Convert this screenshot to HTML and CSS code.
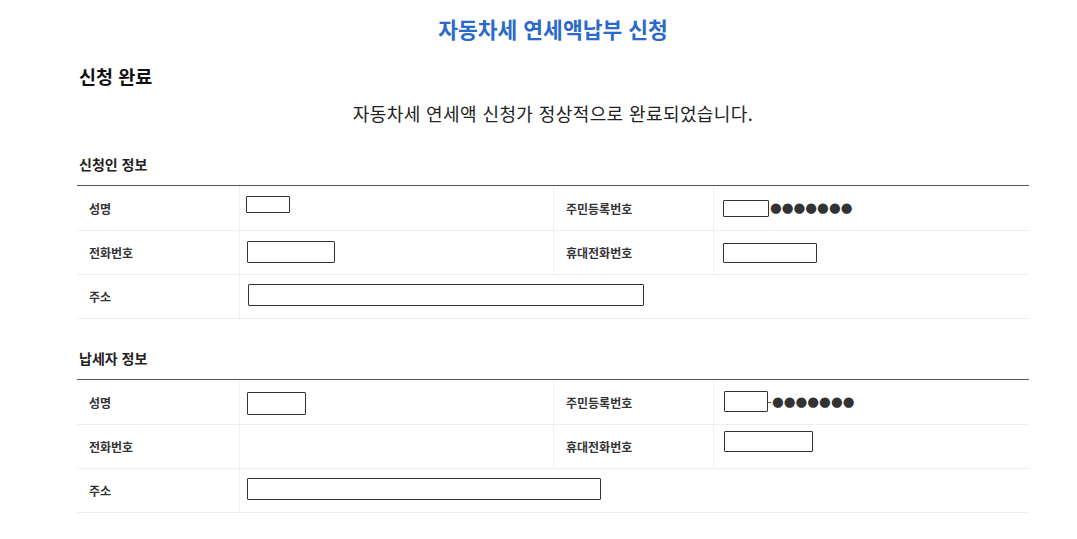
FILE: index.html
```html
<!DOCTYPE html>
<html lang="ko">
<head>
<meta charset="utf-8">
<title>자동차세 연세액납부 신청</title>
<link rel="stylesheet" href="styles.css">
</head>
<body>
<div class="page">
  <h1 class="title">자동차세 연세액납부 신청</h1>
  <h2 class="done-head">신청 완료</h2>
  <p class="message">자동차세 연세액 신청가 정상적으로 완료되었습니다.</p>

  <section class="sec">
    <h3 class="sec-title">신청인 정보</h3>
    <div class="table">
      <div class="row r1">
        <div class="lab">성명</div>
        <div class="val"><span class="box b-name1"></span></div>
        <div class="lab lab2">주민등록번호</div>
        <div class="val"><span class="box b-ssn1"></span><span class="dots">●●●●●●●</span></div>
      </div>
      <div class="row">
        <div class="lab">전화번호</div>
        <div class="val"><span class="box b-tel1"></span></div>
        <div class="lab lab2">휴대전화번호</div>
        <div class="val"><span class="box b-mob1"></span></div>
      </div>
      <div class="row full">
        <div class="lab">주소</div>
        <div class="val"><span class="box b-addr1"></span></div>
      </div>
    </div>
  </section>

  <section class="sec">
    <h3 class="sec-title">납세자 정보</h3>
    <div class="table">
      <div class="row r1">
        <div class="lab">성명</div>
        <div class="val"><span class="box b-name2"></span></div>
        <div class="lab lab2">주민등록번호</div>
        <div class="val"><span class="box b-ssn2"></span><span class="dash"></span><span class="dots">●●●●●●●</span></div>
      </div>
      <div class="row">
        <div class="lab">전화번호</div>
        <div class="val"></div>
        <div class="lab lab2">휴대전화번호</div>
        <div class="val"><span class="box b-mob2"></span></div>
      </div>
      <div class="row full">
        <div class="lab">주소</div>
        <div class="val"><span class="box b-addr2"></span></div>
      </div>
    </div>
  </section>
</div>
</body>
</html>
```

FILE: styles.css
```css
* { box-sizing: border-box; }
html, body { margin: 0; padding: 0; background: #fff; }
body {
  font-family: "Noto Sans CJK KR", "Noto Sans", sans-serif;
  color: #222;
}
.page {
  width: 952px;
  margin-left: 77px;
  padding-top: 14px;
}
.title {
  margin: 0;
  text-align: center;
  font-size: 21.5px;
  line-height: 30px;
  font-weight: 700;
  color: #2a6acb;
}
.done-head {
  margin: 19px 0 0 2px;
  font-size: 18.5px;
  line-height: 26px;
  font-weight: 700;
  color: #111;
}
.message {
  margin: 12px 0 0;
  text-align: center;
  font-size: 18px;
  line-height: 24px;
  letter-spacing: 0.4px;
  color: #222;
}
.sec { margin-top: 29px; }
.sec + .sec { margin-top: 29px; }
.sec-title {
  margin: 0 0 11px 2px;
  font-size: 14px;
  line-height: 20px;
  font-weight: 700;
  color: #222;
}
.table {
  border-top: 1.5px solid #555;
}
.row {
  display: grid;
  grid-template-columns: 163px 314px 160px 315px;
  height: 44px;
  border-bottom: 1px solid #eeeeee;
}
.row.r1 { height: 45px; }
.row.full { grid-template-columns: 163px 789px; }
.lab {
  display: flex;
  align-items: center;
  padding-left: 12px;
  font-size: 12px;
  font-weight: 700;
  color: #333;
  border-right: 1px solid #f1f1f1;
}
.lab2 { padding-left: 12px; }
.val {
  display: flex;
  align-items: center;
  padding-left: 7px;
  border-right: 1px solid #f1f1f1;
}
.row .val:last-child { border-right: none; }
.box {
  display: inline-block;
  background: #fff;
  border: 1.5px solid #333;
  border-radius: 1px;
}
.b-name1 { width: 44px; height: 17px; margin-top: -8px; margin-left: -1px; }
.b-ssn1 { width: 46px; height: 17px; margin-left: 2px; }
.b-tel1 { width: 88px; height: 22px; margin-top: -2px; }
.b-mob1 { width: 94px; height: 20px; margin-left: 2px; }
.b-addr1 { width: 396px; height: 22px; margin-top: -3px; margin-left: 1px; }
.b-name2 { width: 59px; height: 23px; margin-top: 2px; }
.b-ssn2 { width: 44px; height: 21px; margin-left: 3px; margin-top: -2px; }
.b-mob2 { width: 89px; height: 21px; margin-left: 3px; margin-top: -10px; }
.b-addr2 { width: 354px; height: 22px; margin-top: -3px; }
.dash {
  display: inline-block;
  width: 3px;
  height: 1px;
  background: #555;
}
.dots {
  font-family: "DejaVu Sans", sans-serif;
  font-size: 13.5px;
  letter-spacing: 0px;
  color: #333;
  margin-left: 1px;
  line-height: 1;
}
```
